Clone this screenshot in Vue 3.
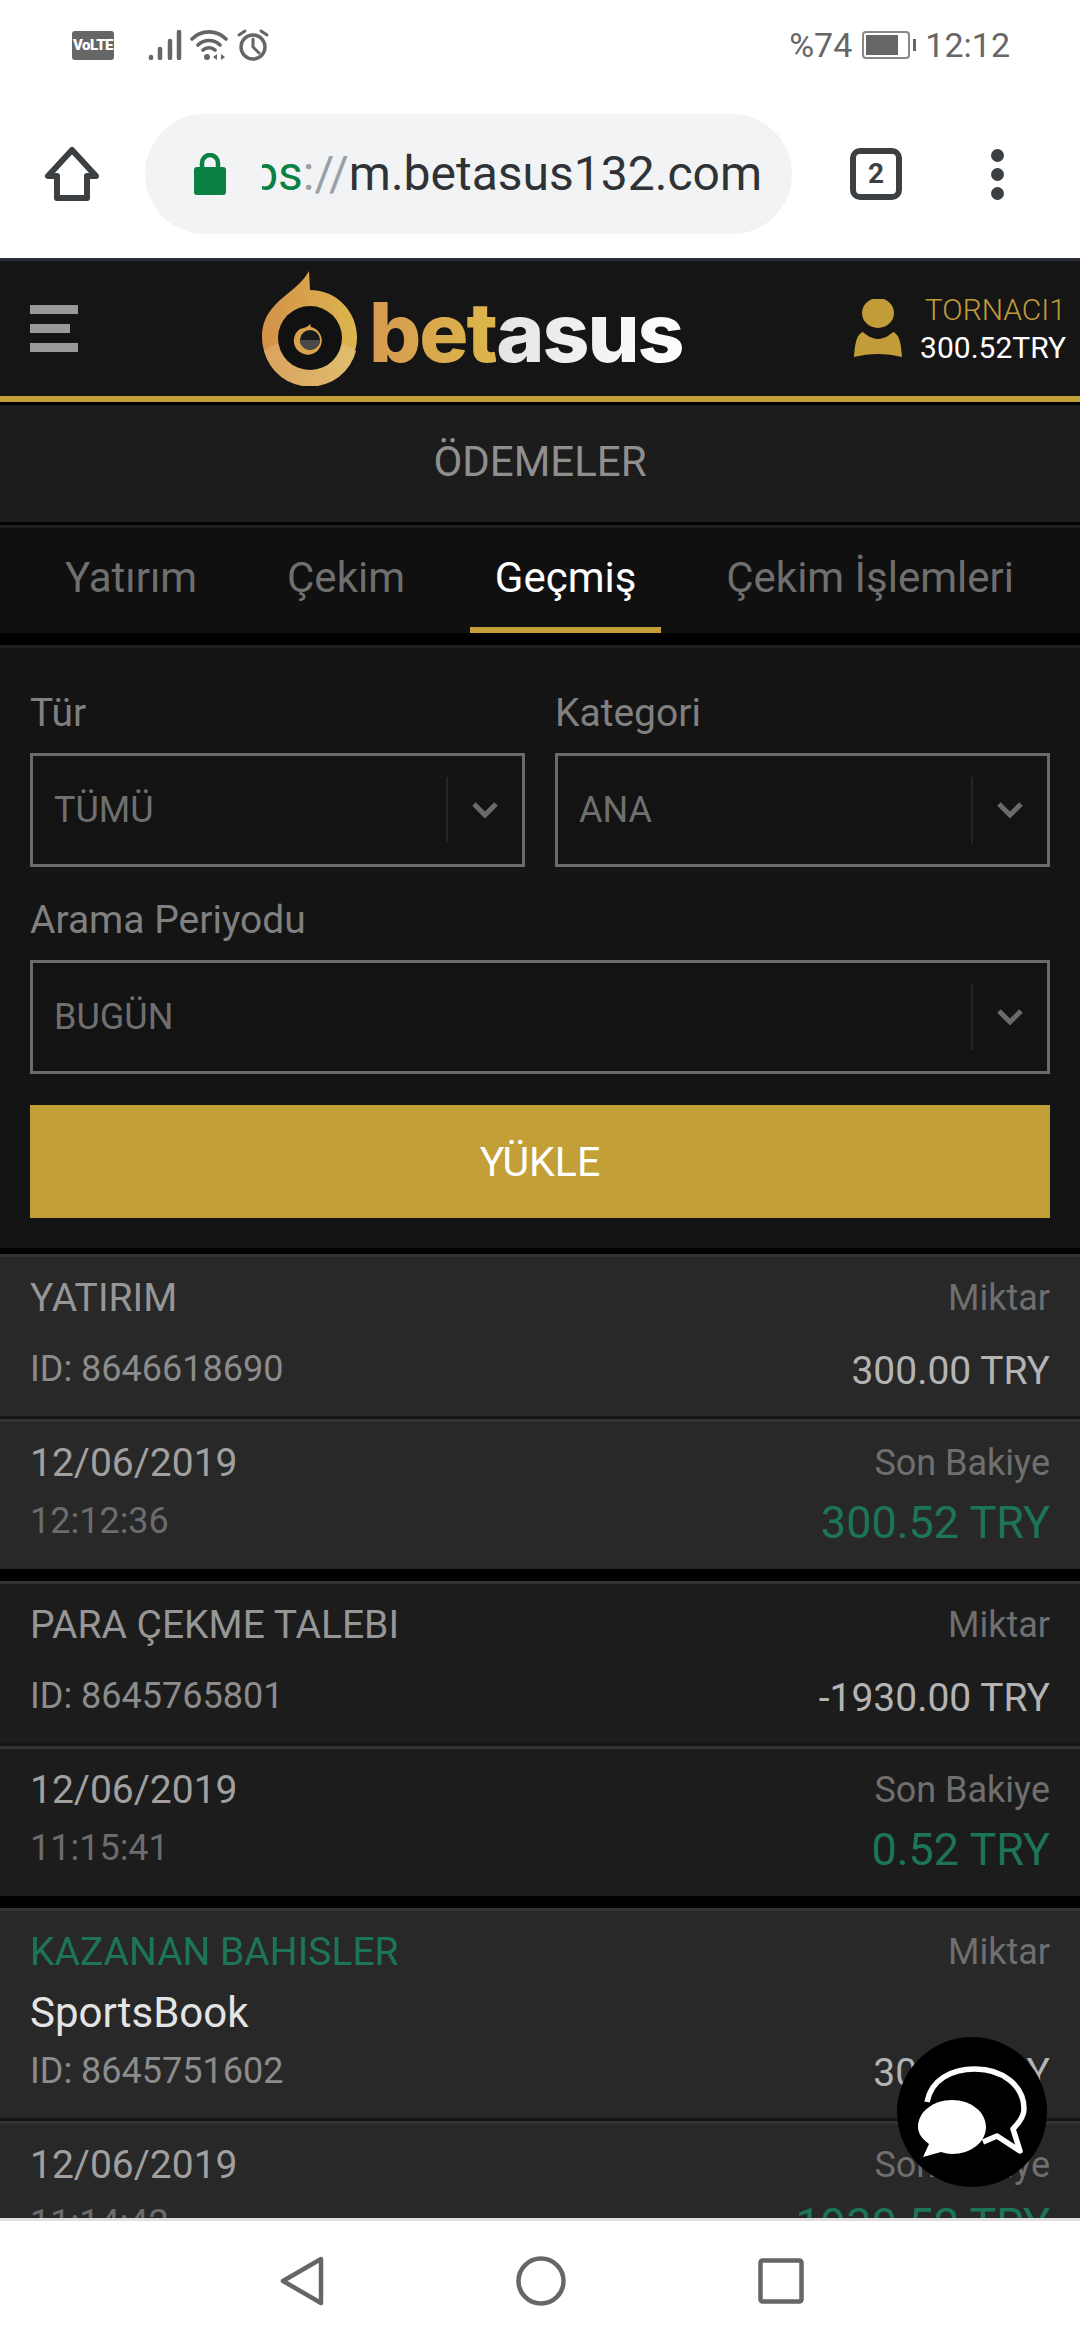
<template>
  <div class="phone">
    <!-- system status bar -->
    <div class="status">
      <div class="status-left">
        <span class="volte">VoLTE</span>
        <svg class="signal" width="34" height="30" viewBox="0 0 34 30">
          <g stroke="#666" stroke-width="4.5" stroke-linecap="round">
            <path d="M3 27v1M12 19v9M22 11v17M31 2v26" />
          </g>
        </svg>
        <svg class="wifi" width="38" height="30" viewBox="0 0 38 30" fill="none">
          <g stroke="#666" stroke-width="3.6" stroke-linecap="round">
            <path d="M2 9c9-9.500 25-9.500 34 0M8 15c6-6 16-6 22 0M13 20c3-3 9-3 12 0" />
          </g>
          <circle cx="17" cy="27" r="3" fill="#666" />
          <path d="M27 24l-4 3 4 3zM31 24l4 3-4 3z" fill="#666" />
        </svg>
        <svg class="alarm" width="32" height="32" viewBox="0 0 32 32" fill="none">
          <circle cx="16" cy="18" r="12" stroke="#666" stroke-width="3.400" />
          <path d="M16 10v8l6 6M2 6l6-4M30 6l-6-4" stroke="#666" stroke-width="3" stroke-linecap="round" />
        </svg>
      </div>
      <div class="status-right">
        <span>%74</span>
        <span class="battery"><i></i></span>
        <span class="clock">12:12</span>
      </div>
    </div>

    <!-- browser toolbar -->
    <div class="toolbar">
      <svg class="home" width="58" height="58" viewBox="0 0 58 58" fill="none">
        <path d="M29 5L5 31h9v22h30V31h9z" stroke="#3c4043" stroke-width="6" stroke-linejoin="round" />
      </svg>
      <div class="omnibox">
        <svg width="32" height="42" viewBox="0 0 32 42" fill="none">
          <rect x="0" y="14" width="32" height="28" rx="3" fill="#0b8043" />
          <path d="M8 16V10a8 8 0 0 1 16 0v6" stroke="#0b8043" stroke-width="4.500" />
        </svg>
        <div class="url"><span class="url-inner"><span class="https">https</span><span class="slashes">://</span>m.betasus132.com</span></div>
      </div>
      <div class="tab-count">2</div>
      <div class="dots"><i></i><i></i><i></i></div>
    </div>

    <!-- site -->
    <div class="site">
      <header class="site-head">
        <div class="burger"><i></i><i class="short"></i><i></i></div>
        <div class="logo">
          <svg width="96" height="115" viewBox="0 0 96 115">
            <defs>
              <linearGradient id="ringFill" x1="0" x2="1" y1="0" y2="0">
                <stop offset="0" stop-color="#d3914a" />
                <stop offset="1" stop-color="#dcb64e" />
              </linearGradient>
              <linearGradient id="ringLow" x1="0" x2="1" y1="0" y2="0">
                <stop offset="0" stop-color="#dba25f" />
                <stop offset="1" stop-color="#e0bd6e" />
              </linearGradient>
            </defs>
            <path d="M47 0L48 19C75 19 95 41 95 66A47.500 47.500 0 1 1 0 66C0 45 12 34 24 24C34 16 42 9 47 0Z" fill="url(#ringFill)" />
            <path d="M2 80C18 68 32 72 48 72S78 68 94 80A47.500 47.500 0 0 1 2 80Z" fill="url(#ringLow)" />
            <circle cx="48" cy="67" r="32" fill="#111" />
            <path d="M48 53L49 56A14 14 0 1 1 38 58C42 57 46 56 48 53Z" fill="#d8a24f" />
            <circle cx="48" cy="69" r="10" fill="#1a1a1a" />
            <path d="M38 69a10 10 0 0 0 20 0z" fill="#4a4a4a" />
          </svg>
          <span class="logo-word"><span class="bet">bet</span><span class="asus">asus</span></span>
        </div>
        <div class="account">
          <svg width="48" height="60" viewBox="0 0 48 60">
            <ellipse cx="24" cy="14" rx="16" ry="15" fill="#c39c3a" />
            <path d="M9 33c3 3 9 7 15 7s12-4 15-7c6 2 8 10 9 25-8-2-16-3-24-3S8 56 0 58c1-15 3-23 9-25z" fill="#c39c3a" />
          </svg>
          <div class="account-text">
            <span class="user">TORNACI1</span>
            <span class="balance">300.52TRY</span>
          </div>
        </div>
      </header>

      <div class="page-title">ÖDEMELER</div>

      <nav class="tabs">
        <a v-for="t in tabs" :key="t" :class="{ active: t === 'Geçmiş' }">{{ t }}</a>
      </nav>

      <section class="filters">
        <div class="field-row">
          <label class="field">
            <span class="field-label">Tür</span>
            <span class="select"><span class="select-value">TÜMÜ</span><span class="select-arrow"><svg width="26" height="16" viewBox="0 0 26 16" fill="none"><path d="M2 2l11 11L24 2" stroke="#6a6a6a" stroke-width="5" /></svg></span></span>
          </label>
          <label class="field">
            <span class="field-label">Kategori</span>
            <span class="select"><span class="select-value">ANA</span><span class="select-arrow"><svg width="26" height="16" viewBox="0 0 26 16" fill="none"><path d="M2 2l11 11L24 2" stroke="#6a6a6a" stroke-width="5" /></svg></span></span>
          </label>
        </div>
        <label class="field">
          <span class="field-label">Arama Periyodu</span>
          <span class="select"><span class="select-value">BUGÜN</span><span class="select-arrow"><svg width="26" height="16" viewBox="0 0 26 16" fill="none"><path d="M2 2l11 11L24 2" stroke="#6a6a6a" stroke-width="5" /></svg></span></span>
        </label>
        <button class="load">YÜKLE</button>
      </section>

      <section class="history">
        <article v-for="item in history" :key="item.id" class="entry" :class="{ alt: item.alt }">
          <div class="entry-row top">
            <div class="col">
              <span class="type" :class="{ won: item.won }">{{ item.type }}</span>
              <span v-if="item.product" class="product">{{ item.product }}</span>
              <span class="ref" :class="{ tight: item.product }">ID: {{ item.id }}</span>
            </div>
            <div class="col right">
              <span class="caption">Miktar</span>
              <span class="amount" :class="{ low: item.product }">{{ item.amount }}</span>
            </div>
          </div>
          <div class="entry-row bottom">
            <div class="col">
              <span class="date">{{ item.date }}</span>
              <span class="time">{{ item.time }}</span>
            </div>
            <div class="col right">
              <span class="caption">Son Bakiye</span>
              <span class="closing">{{ item.balance }}</span>
            </div>
          </div>
        </article>
      </section>

      <!-- floating live chat button -->
      <div class="chat">
        <svg width="110" height="92" viewBox="0 0 110 92">
          <path d="M10 36C14 14 34 3 58 3c28 0 49 17 49 40 0 8-5 14-11 20l7 22-23-15-14 6" fill="none" stroke="#fff" stroke-width="5.500" stroke-linejoin="round" />
          <path d="M35 34c19 0 34 12 34 27S54 88 35 88c-4 0-7-1-11-2L6 91l6-13C5 73 1 67 1 61c0-15 15-27 34-27z" fill="#fff" />
        </svg>
      </div>
    </div>

    <!-- system navigation bar -->
    <footer class="navbar">
      <svg width="44" height="50" viewBox="0 0 44 50" fill="none">
        <path d="M41 3v44L3 25z" stroke="#666" stroke-width="4.500" stroke-linejoin="round" />
      </svg>
      <svg width="50" height="50" viewBox="0 0 50 50" fill="none">
        <circle cx="25" cy="25" r="22.500" stroke="#666" stroke-width="4.500" />
      </svg>
      <svg width="46" height="46" viewBox="0 0 46 46" fill="none">
        <rect x="2.500" y="2.500" width="41" height="41" rx="2" stroke="#666" stroke-width="4.500" />
      </svg>
    </footer>
  </div>
</template>

<script setup>
const tabs = ["Yatırım", "Çekim", "Geçmiş", "Çekim İşlemleri"];

const history = [
  {
    type: "YATIRIM",
    id: "8646618690",
    amount: "300.00 TRY",
    date: "12/06/2019",
    time: "12:12:36",
    balance: "300.52 TRY",
  },
  {
    type: "PARA ÇEKME TALEBI",
    id: "8645765801",
    amount: "-1930.00 TRY",
    date: "12/06/2019",
    time: "11:15:41",
    balance: "0.52 TRY",
    alt: true,
  },
  {
    type: "KAZANAN BAHISLER",
    won: true,
    product: "SportsBook",
    id: "8645751602",
    amount: "30.00 TRY",
    date: "12/06/2019",
    time: "11:14:42",
    balance: "1930.52 TRY",
  },
];
</script>

<style>
html,
body {
  margin: 0;
  background: #fff;
}
</style>

<style scoped>
.phone {
  width: 1080px;
  height: 2340px;
  display: flex;
  flex-direction: column;
  overflow: hidden;
  background: #fff;
  font-family: Roboto, "Noto Sans", sans-serif;
}

/* status bar */
.status {
  height: 90px;
  flex: none;
  display: flex;
  align-items: center;
  justify-content: space-between;
  padding: 0 70px 0 72px;
  color: #666;
  font-size: 34px;
}
.status-left,
.status-right {
  display: flex;
  align-items: center;
}
.volte {
  width: 42px;
  height: 29px;
  border-radius: 3px;
  background: #666;
  color: #fff;
  font-size: 15px;
  font-weight: 900;
  letter-spacing: -0.5px;
  line-height: 29px;
  text-align: center;
}
.signal {
  margin-left: 34px;
}
.wifi {
  margin-left: 8px;
}
.alarm {
  margin-left: 9px;
}
.battery {
  width: 48px;
  height: 28px;
  margin-left: 10px;
  box-sizing: border-box;
  border: 2px solid #888;
  border-radius: 4px;
  padding: 2px;
  display: flex;
  position: relative;
}
.battery i {
  width: 78%;
  background: #666;
}
.battery::after {
  content: "";
  position: absolute;
  right: -8px;
  top: 6px;
  width: 3px;
  height: 12px;
  background: #666;
}
.clock {
  margin-left: 15px;
}

/* browser toolbar */
.toolbar {
  height: 168px;
  flex: none;
  position: relative;
  display: flex;
  align-items: center;
  box-sizing: border-box;
  padding: 0 0 0 43px;
}
.omnibox {
  width: 647px;
  height: 120px;
  margin-left: 44px;
  box-sizing: border-box;
  padding-left: 49px;
  display: flex;
  align-items: center;
  border-radius: 60px;
  background: #f1f3f4;
}
.url {
  width: 500px;
  margin-left: 36px;
  overflow: hidden;
  display: flex;
  justify-content: flex-end;
  color: #303336;
  font-size: 48px;
  line-height: 60px;
  white-space: nowrap;
}
.url-inner {
  flex: none;
}
.https {
  color: #0b8043;
}
.slashes {
  color: #9aa0a6;
}
.tab-count {
  width: 52px;
  height: 52px;
  margin-left: 58px;
  box-sizing: border-box;
  border: 6px solid #3c4043;
  border-radius: 10px;
  color: #3c4043;
  font-size: 28px;
  font-weight: 700;
  line-height: 40px;
  text-align: center;
}
.dots {
  margin-left: 89px;
  display: flex;
  flex-direction: column;
  gap: 6px;
}
.dots i {
  width: 13px;
  height: 13px;
  border-radius: 50%;
  background: #3c4043;
}

/* site header */
.site {
  flex: 1;
  min-height: 0;
  position: relative;
  overflow: hidden;
  background: #000;
}
.site-head {
  height: 135px;
  box-sizing: content-box;
  border-top: 3px solid #2a2e38;
  border-bottom: 6px solid #c39f37;
  display: flex;
  align-items: center;
  padding-left: 30px;
  background: #151515;
}
.burger {
  width: 48px;
  display: flex;
  flex-direction: column;
  gap: 10px;
}
.burger i {
  height: 9px;
  background: #999;
}
.burger i.short {
  width: 40px;
}
.logo {
  margin-left: 184px;
  display: flex;
  align-items: center;
}
.logo-word {
  margin-left: 11px;
  margin-top: 8px;
  font-family: Inter, sans-serif;
  font-size: 82px;
  font-weight: 800;
  letter-spacing: -2px;
  line-height: 90px;
}
.bet {
  background: linear-gradient(90deg, #d69a50, #dcb64a);
  -webkit-background-clip: text;
  background-clip: text;
  color: transparent;
}
.asus {
  background: linear-gradient(90deg, #e4e4e4, #fff);
  -webkit-background-clip: text;
  background-clip: text;
  color: transparent;
}
.account {
  margin-left: auto;
  padding-right: 14px;
  display: flex;
  align-items: center;
  gap: 18px;
}
.account-text {
  display: flex;
  flex-direction: column;
  align-items: flex-end;
  font-size: 30px;
  line-height: 38px;
}
.user {
  color: #c39c3a;
  font-weight: 300;
}
.balance {
  color: #fff;
}

/* page title and tabs */
.page-title {
  height: 117px;
  margin-top: 3px;
  background: #1c1c1c;
  color: #8f8f8f;
  font-size: 42px;
  line-height: 114px;
  text-align: center;
}
.tabs {
  height: 105px;
  margin-top: 3px;
  border-top: 3px solid #1f1f1f;
  display: flex;
  justify-content: space-between;
  padding: 0 41px 0 40px;
  background: #101010;
}
.tabs a {
  padding: 0 25px;
  border-bottom: 6px solid transparent;
  color: #6f6f6f;
  font-size: 42px;
  line-height: 100px;
}
.tabs a.active {
  border-bottom-color: #c39f37;
  color: #fff;
}

/* filter form */
.filters {
  margin-top: 12px;
  height: 603px;
  box-sizing: border-box;
  border-top: 3px solid #1f1f1f;
  padding: 43px 30px 0;
  background: #141414;
}
.field-row {
  display: flex;
  gap: 30px;
  margin-bottom: 31px;
}
.field-row .field {
  flex: 1;
}
.field {
  display: block;
}
.field-label {
  display: block;
  height: 44px;
  margin-bottom: 18px;
  color: #808080;
  font-size: 39px;
  line-height: 44px;
}
.select {
  height: 114px;
  box-sizing: border-box;
  border: 3px solid #6b6b6b;
  display: flex;
  align-items: center;
  background: #131313;
}
.select-value {
  flex: 1;
  padding-left: 21px;
  color: #6f6f6f;
  font-size: 36px;
}
.select-arrow {
  width: 76px;
  height: 66px;
  box-sizing: border-box;
  border-left: 2px solid #252525;
  display: flex;
  align-items: center;
  justify-content: center;
}
.load {
  display: block;
  width: 100%;
  height: 113px;
  margin-top: 31px;
  border: none;
  background: #c3a037;
  color: #fff;
  font-family: inherit;
  font-size: 41px;
}

/* transaction list */
.history {
  margin-top: 6px;
  display: flex;
  flex-direction: column;
  gap: 12px;
}
.entry {
  background: #282828;
}
.entry.alt {
  background: #1c1c1c;
}
.entry-row {
  display: flex;
  justify-content: space-between;
  padding: 19px 30px 0;
  border-top: 3px solid #333;
}
.entry-row.top {
  padding-bottom: 23px;
  border-bottom: 3px solid #161616;
}
.entry-row.bottom {
  padding-bottom: 24px;
}
.col {
  display: flex;
  flex-direction: column;
}
.col.right {
  align-items: flex-end;
}
.col span {
  height: 44px;
  line-height: 44px;
  white-space: nowrap;
}
.type {
  color: #969696;
  font-size: 39px;
}
.type.won {
  color: #1d7558;
}
.product {
  margin-top: 17px;
  color: #e4e4e4;
  font-size: 42px;
}
.ref {
  margin-top: 27px;
  color: #8c8c8c;
  font-size: 36px;
}
.ref.tight {
  margin-top: 14px;
}
.caption {
  color: #6f6f6f;
  font-size: 36px;
}
.amount {
  margin-top: 29px;
  color: #b4b4b4;
  font-size: 39px;
}
.amount.low {
  margin-top: 77px;
}
.date {
  color: #a0a0a0;
  font-size: 39px;
}
.time {
  margin-top: 14px;
  color: #6c6c6c;
  font-size: 36px;
}
.closing {
  margin-top: 16px;
  color: #1d7558;
  font-size: 45px;
}

.chat {
  position: absolute;
  right: 33px;
  bottom: 31px;
  width: 150px;
  height: 150px;
  border-radius: 50%;
  background: #000;
  display: flex;
  align-items: center;
  justify-content: center;
}

/* system navigation */
.navbar {
  height: 122px;
  flex: none;
  box-sizing: border-box;
  padding-left: 3px;
  border-top: 3px solid #e0e0e0;
  display: flex;
  align-items: center;
  justify-content: center;
  gap: 192px;
  background: #fff;
}
</style>
